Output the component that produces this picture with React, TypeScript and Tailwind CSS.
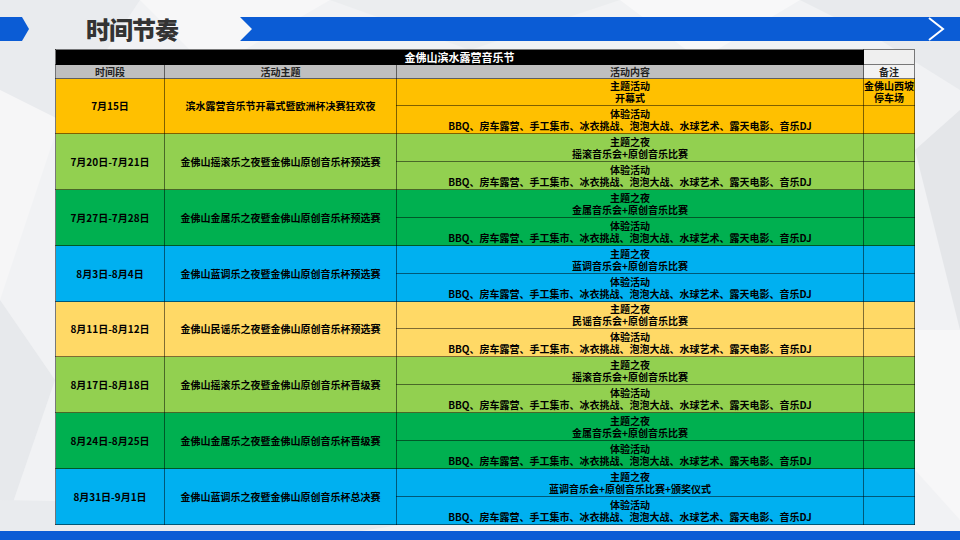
import React from "react";

type Group = {
  date: string;
  theme: string;
  head: string;
  detail: string;
  bg: string;
  note?: [string, string];
};

const EXP = "BBQ、房车露营、手工集市、冰衣挑战、泡泡大战、水球艺术、露天电影、音乐DJ";

const groups: Group[] = [
  { date: "7月15日", theme: "滨水露营音乐节开幕式暨欧洲杯决赛狂欢夜", head: "主题活动", detail: "开幕式", bg: "bg-[#ffc000]", note: ["金佛山西坡", "停车场"] },
  { date: "7月20日-7月21日", theme: "金佛山摇滚乐之夜暨金佛山原创音乐杯预选赛", head: "主题之夜", detail: "摇滚音乐会+原创音乐比赛", bg: "bg-[#92d050]" },
  { date: "7月27日-7月28日", theme: "金佛山金属乐之夜暨金佛山原创音乐杯预选赛", head: "主题之夜", detail: "金属音乐会+原创音乐比赛", bg: "bg-[#00b050]" },
  { date: "8月3日-8月4日", theme: "金佛山蓝调乐之夜暨金佛山原创音乐杯预选赛", head: "主题之夜", detail: "蓝调音乐会+原创音乐比赛", bg: "bg-[#00b0f0]" },
  { date: "8月11日-8月12日", theme: "金佛山民谣乐之夜暨金佛山原创音乐杯预选赛", head: "主题之夜", detail: "民谣音乐会+原创音乐比赛", bg: "bg-[#ffd966]" },
  { date: "8月17日-8月18日", theme: "金佛山摇滚乐之夜暨金佛山原创音乐杯晋级赛", head: "主题之夜", detail: "摇滚音乐会+原创音乐比赛", bg: "bg-[#92d050]" },
  { date: "8月24日-8月25日", theme: "金佛山金属乐之夜暨金佛山原创音乐杯晋级赛", head: "主题之夜", detail: "金属音乐会+原创音乐比赛", bg: "bg-[#00b050]" },
  { date: "8月31日-9月1日", theme: "金佛山蓝调乐之夜暨金佛山原创音乐杯总决赛", head: "主题之夜", detail: "蓝调音乐会+原创音乐比赛+颁奖仪式", bg: "bg-[#00b0f0]" },
];

const cell = "border border-black/50 p-0 text-center align-middle";

// faint low-poly backdrop
function Backdrop() {
  return (
    <svg className="absolute inset-0 h-full w-full" viewBox="0 0 960 540" preserveAspectRatio="none">
      <rect width="960" height="540" fill="#f1f2f4" />
      <polygon points="0,0 140,0 60,120 0,90" fill="#e9ebee" />
      <polygon points="140,0 330,0 210,70" fill="#f7f7f8" />
      <polygon points="330,0 620,0 470,50" fill="#ebedef" />
      <polygon points="620,0 800,0 700,60" fill="#f8f8f9" />
      <polygon points="800,0 960,0 960,90 880,40" fill="#e8eaed" />
      <polygon points="0,90 60,120 0,300" fill="#f6f6f7" />
      <polygon points="0,300 55,380 0,540" fill="#e7e9ec" />
      <polygon points="915,150 960,110 960,330" fill="#e4e6e9" />
      <polygon points="915,330 960,330 960,520 915,470" fill="#f7f7f8" />
      <polygon points="0,500 500,510 300,540 0,540" fill="#e9ebee" />
    </svg>
  );
}

export default function App() {
  return (
    <div className="relative h-[540px] w-[960px] overflow-hidden" style={{ fontFamily: '"Noto Sans CJK SC", "Noto Sans", sans-serif' }}>
      <Backdrop />
      <div className="relative flex h-full flex-col">
        {/* header strip */}
        <div className="mt-[17px] flex h-[24px] items-center">
          <svg width="29" height="24" viewBox="0 0 29 24" className="flex-none">
            <polygon points="0,0 22,0 29,12 22,24 0,24" fill="#0b5cd5" />
          </svg>
          <div className="ml-[57px] w-[154px] flex-none text-[24px] font-black leading-[24px] tracking-[-1px] text-[#333]">时间节奏</div>
          <svg className="h-[24px] flex-1" viewBox="0 0 720 24" preserveAspectRatio="none">
            <polygon points="0,0 720,0 720,24 0,24 12,12" fill="#0b5cd5" />
            <polyline points="689,1 703,12 689,23" fill="none" stroke="#ffffff" strokeWidth="2" />
          </svg>
        </div>

        {/* schedule table */}
        <table className="ml-[55px] mt-[8px] w-[859px] table-fixed border-collapse text-[10px] font-bold leading-[12px] text-black">
          <colgroup>
            <col className="w-[109px]" />
            <col className="w-[232px]" />
            <col className="w-[467px]" />
            <col className="w-[51px]" />
          </colgroup>
          <tbody>
            <tr className="h-[15px]">
              <td colSpan={3} className={`${cell} bg-black text-[11px] text-white`}>金佛山滨水露营音乐节</td>
              <td className="border border-[#777] bg-[#efefef] p-0"></td>
            </tr>
            <tr className="h-[14px] text-[#222]">
              <td className={`${cell} border-[#777] bg-[#bfbfbf]`}>时间段</td>
              <td className={`${cell} border-[#777] bg-[#bfbfbf]`}>活动主题</td>
              <td className={`${cell} border-[#777] bg-[#bfbfbf]`}>活动内容</td>
              <td className={`${cell} border-[#777] bg-[#f2f2f2]`}>备注</td>
            </tr>
            {groups.map((g, i) => (
              <React.Fragment key={g.date}>
                <tr className={i === 0 || i === 4 ? "h-[27px]" : "h-[28px]"}>
                  <td rowSpan={2} className={`${cell} ${g.bg}`}>{g.date}</td>
                  <td rowSpan={2} className={`${cell} ${g.bg}`}>{g.theme}</td>
                  <td className={`${cell} ${g.bg}`}>
                    <div>{g.head}</div>
                    <div>{g.detail}</div>
                  </td>
                  <td className={`${cell} ${g.bg} align-top`}>
                    {g.note ? (
                      <>
                        <div className="mt-[1px]">{g.note[0]}</div>
                        <div>{g.note[1]}</div>
                      </>
                    ) : null}
                  </td>
                </tr>
                <tr className="h-[28px]">
                  <td className={`${cell} ${g.bg}`}>
                    <div>体验活动</div>
                    <div>{EXP}</div>
                  </td>
                  <td className={`${cell} ${g.bg}`}></td>
                </tr>
              </React.Fragment>
            ))}
          </tbody>
        </table>

        <div className="mt-auto h-[9px] bg-[#0b5cd5]"></div>
      </div>
    </div>
  );
}
